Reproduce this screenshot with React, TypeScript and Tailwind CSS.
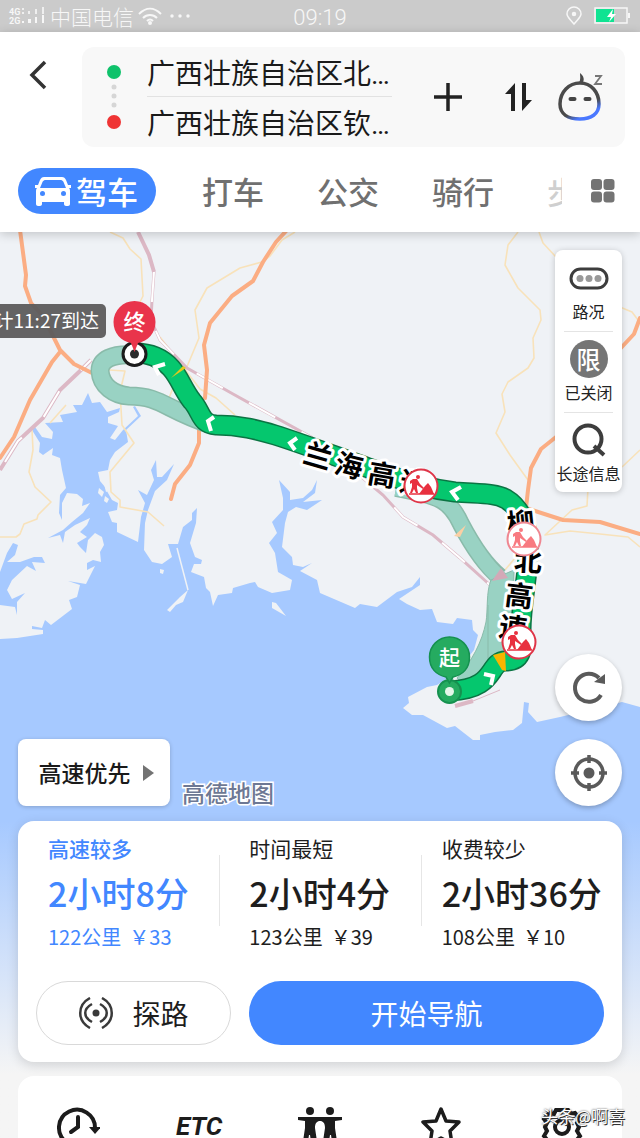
import React, { useState } from 'react';

const modes = ['打车', '公交', '骑行'];

const routes = [
  { name: '高速较多', time: '2小时8分', distance: '122公里', toll: '￥33' },
  { name: '时间最短', time: '2小时4分', distance: '123公里', toll: '￥39' },
  { name: '收费较少', time: '2小时36分', distance: '108公里', toll: '￥10' },
];

const mainRoute =
  'M135 353 C152 353 163 359 171 368 C180 378 183 390 192 401 C202 412 200 424 216 425 C240 425 258 430 275 435 C310 446 345 460 380 472 C410 483 430 489 455 492 C480 494 495 493 506 499 C518 506 527 522 528 540 C530 570 521 600 521 630 C524 652 520 661 506 661 C487 661 498 689 450 691';

const coast =
  'M0 639 L17 638 43 634 43 630 32 629 32 626 42 628 45 620 51 625 72 609 69 600 77 597 80 585 68 581 86 584 95 566 87 570 87 563 93 560 101 562 100 552 104 545 102 537 95 533 88 540 86 553 80 547 77 543 87 537 80 532 87 525 90 518 75 525 65 532 63 543 60 535 48 538 63 530 72 522 83 513 90 503 82 506 83 499 77 494 67 493 62 503 62 520 59 513 60 495 66 488 62 470 60 458 52 455 53 448 43 455 39 452 40 443 32 430 35 427 42 437 52 439 53 432 45 423 63 422 60 415 77 412 73 405 82 405 88 393 92 403 100 402 107 412 120 408 119 412 108 417 108 423 118 426 110 438 115 440 123 430 138 416 133 407 135 406 141 416 126 430 128 442 115 452 110 460 108 470 98 472 100 481 105 487 108 493 112 500 118 503 117 510 108 512 112 522 117 523 117 532 138 542 141 517 145 503 138 490 147 495 154 480 151 470 156 460 157 477 162 477 174 464 167 480 155 491 148 510 145 523 144 550 152 562 162 564 172 557 168 544 178 544 183 527 192 520 192 513 197 508 196 523 190 543 195 557 202 560 201 564 194 564 191 572 204 577 206 588 210 592 213 606 218 595 232 593 233 588 250 583 255 582 258 587 272 593 290 590 292 580 278 572 275 553 269 543 277 533 272 522 283 510 283 498 279 480 290 492 290 500 303 498 312 490 317 480 315 493 303 502 322 500 307 510 296 507 288 512 285 523 282 547 292 557 293 565 303 567 312 563 300 571 317 580 320 593 355 608 360 604 377 607 397 592 412 587 420 577 420 585 399 599 407 604 420 610 432 609 437 622 453 624 457 618 472 620 473 630 478 635 474 650 455 674 437 685 427 687 408 697 409 703 403 708 412 715 423 715 447 728 455 726 473 740 480 740 480 735 495 732 513 730 522 723 524 702 529 703 528 712 537 722 560 717 622 702 640 707 640 1138 0 1138 Z';

function RoadWork({ x, y, faded = false }: { x: number; y: number; faded?: boolean }) {
  return (
    <g transform={`translate(${x} ${y})`}>
      <circle r="16.5" fill="#fff" stroke={faded ? '#ef8791' : '#df3548'} strokeWidth="2" />
      <g fill={faded ? '#f87a80' : '#e8303f'}>
        <circle cx="-3" cy="-9" r="2" />
        <path d="M-8 -7 L-4 -7 L-1 -2 L3 2 L2 3 L-4 -1 L-4 2 L-3 7 L-5 7 L-7 3 L-9 7 L-11 7 L-9 1 L-9 -3 L-11 -2 L-11 -5 Z" />
        <path d="M-2 8 L4 0 L7 -3 L10 1 L13 8 Z" />
      </g>
      <path d="M-12 8 H13" stroke={faded ? '#f87a80' : '#e8303f'} strokeWidth="1.5" />
    </g>
  );
}

function RoadName({ x, y, angle, children }: { x: number; y: number; angle: number; children: string }) {
  return (
    <text
      transform={`translate(${x} ${y}) rotate(${angle})`}
      textAnchor="middle"
      dy="10"
      className="text-[28px] font-bold"
      fill="#000"
      stroke="#fff"
      strokeWidth="6"
      strokeLinejoin="round"
      paintOrder="stroke"
    >
      {children}
    </text>
  );
}

function RouteMap() {
  return (
    <svg
      className="absolute inset-0 h-full w-full"
      viewBox="0 232 640 906"
      preserveAspectRatio="xMidYMin slice"
      aria-label="路线地图"
    >
      <rect x="0" y="232" width="640" height="906" fill="#eff2f6" />

      {/* water */}
      <path d={coast} fill="#a6c9ff" />
      <path
        d="M0 572 L7 553 13 543 18 545 15 555 7 562 20 562 34 557 42 557 45 563 32 562 36 571 27 566 12 580 7 590 12 599 25 593 17 602 17 615 15 607 0 605 Z"
        fill="#a6c9ff"
      />
      <path d="M167 610 L180 597 188 590 183 602 176 605 170 612 Z M272 602 L276 603 286 616 272 608 Z M160 569 l4 1 -1 4 -3 -1 Z" fill="#eff2f6" />
      <path d="M177 548 L188 590" stroke="#eff2f6" strokeWidth="1.5" />
      <path d="M104 484 l6 -3 3 8 -7 3 Z M99 488 l5 4 -2 5 -4 -4 Z M105 496 l4 3 -2 4 -3 -2 Z" fill="#eff2f6" />

      {/* minor roads */}
      <g fill="none" stroke="#f8e2ba" strokeWidth="1.6" strokeLinejoin="round">
        <path d="M110 232 L123 238 130 249 141 259 143 296 138 306" />
        <path d="M295 232 L282 240 270 256 262 262 240 268 207 288 195 310 199 338 186 369 173 388 169 398" />
        <path d="M109 370 L125 371 120 392 122 425 134 443 110 472 111 492 120 500 120 507 148 512 164 526" />
        <path d="M32 430 L33 450 29 472 35 487 51 502 38 515 37 519 24 524 20 534 16 537 0 537" />
        <path d="M160 337 L176 358 200 389 216 398 235 415 M66 405 L50 423" />
        <path d="M518 232 L508 245 505 265 518 288 540 310 541 320 533 338 534 358 528 368 508 382 502 394 505 412 496 433 510 455 528 480" />
        <path d="M539 232 L543 243 556 257 M620 307 L632 312 638 320 M622 467 L640 450" />
        <path d="M588 488 L587 506 572 510 545 535 570 531 600 534 628 537 640 547 M520 552 L505 570" />
      </g>

      {/* railways */}
      <g fill="none">
        <g stroke="#dcb8c5" strokeWidth="4">
          <path d="M138 232 L149 255 154 272" />
          <path d="M91 360 L80 371 60 390 43 418 18 441 0 470" />
          <path d="M455 706 L473 701" />
          <path d="M154 272 L152 300 151 320 160 340 187 368 233 394 311 437 345 463 383 495 403 517 433 535 460 558 490 585" strokeWidth="3" />
        </g>
        <g stroke="#fff" strokeWidth="2" strokeDasharray="30 30">
          <path d="M154 272 L152 300 151 320 160 340 187 368 233 394 311 437 345 463 383 495 403 517 433 535 460 558 490 585" />
          <path d="M5 462 L18 441 43 418 60 390 80 371 91 360" />
        </g>
        <path d="M473 701 L500 690" stroke="#dcb8c5" strokeWidth="1" />
      </g>

      {/* highways */}
      <g fill="none" stroke="#fbad83" strokeWidth="4" strokeLinejoin="round" strokeLinecap="round">
        <path d="M20 230 L26 275 25 286 31 303 43 316 60 350 74 364 92 373 M60 352 L52 362 30 400 14 437 0 458" />
        <path d="M0 321 L40 321" strokeWidth="3" />
        <path d="M287 230 L276 242 263 262 253 281 232 296 210 323 204 345 207 370 205 398 M199 428 L199 443 190 465 175 484 171 499" />
        <path d="M640 318 L634 334 620 349 M556 437 L541 449 531 468 528 490 526 508 563 520 600 522 640 534" />
      </g>

      {/* alternative routes */}
      <g fill="none" strokeLinejoin="round">
        <path d="M135 355 C112 353 100 360 100 371 C101 386 114 395 129 396 C162 396 165 410 212 425" stroke="#8abbaa" strokeWidth="19" />
        <path d="M135 355 C112 353 100 360 100 371 C101 386 114 395 129 396 C162 396 165 410 212 425" stroke="#99d2c3" strokeWidth="16" />
        <path d="M396 488 C440 496 450 500 461 524 C472 545 485 565 500 577" stroke="#8abbaa" strokeWidth="18" />
        <path d="M396 488 C440 496 450 500 461 524 C472 545 485 565 501 579" stroke="#99d2c3" strokeWidth="15" />
        <path d="M504 492 C520 498 527 506 533 518" stroke="#8abbaa" strokeWidth="4" />
        <path
          d="M491 580 C486 592 488 610 486 622 C482 642 472 661 457 678 L462 684 C490 680 500 655 512 645 L514 570 Z"
          fill="#99d2c3"
          stroke="#8abbaa"
        />
        <path d="M488 605 V660" stroke="#8abbaa" />
        <path d="M492 581 L501 568 508 578 Z" fill="#d3a9b7" />
        <path d="M454 536 L466 525 460 537 Z" fill="#fbcfa4" />
      </g>

      {/* selected route */}
      <g fill="none" strokeLinejoin="round">
        <path d={mainRoute} stroke="#0b7443" strokeWidth="21" />
        <path d={mainRoute} stroke="#05c76e" strokeWidth="18" />
        <path d="M171 378 L183 366 186 368 Z" fill="#e3c81c" />
        <path d="M493 655 L505 652 506 671 502 670 Z" fill="#f7b500" />
        <g stroke="#fff" strokeWidth="4" strokeLinejoin="miter">
          <path d="M165 364 L155 367 159 375" />
          <path d="M214 417 L208 421 211 431" />
          <path d="M297 438 L290 443 295 450" />
          <path d="M461 487 L452 492 458 500" />
          <path d="M484 674 L493 676 491 685" />
        </g>
      </g>

      <RoadName x={318} y={456} angle={16}>兰</RoadName>
      <RoadName x={349} y={466} angle={14}>海</RoadName>
      <RoadName x={382} y={475} angle={10}>高</RoadName>
      <RoadName x={414} y={483} angle={10}>速</RoadName>
      <RoadName x={521} y={523} angle={-6}>柳</RoadName>
      <RoadName x={528} y={561} angle={3}>北</RoadName>
      <RoadName x={519} y={596} angle={7}>高</RoadName>
      <RoadName x={513} y={628} angle={8}>速</RoadName>

      <RoadWork x={421} y={486} />
      <RoadWork x={524} y={539} faded />
      <RoadWork x={519} y={642} />

      {/* destination */}
      <rect x="-40" y="304" width="146" height="34" rx="5" fill="#5c5b5c" fillOpacity="0.95" />
      <text x="99" y="328" textAnchor="end" className="text-[19px]" fill="#fff">预计11:27到达</text>
      <circle cx="134.5" cy="354" r="11.5" fill="#fff" stroke="#1c1c1c" strokeWidth="3" />
      <circle cx="134.5" cy="354" r="4.5" fill="#2b2b2b" />
      <path d="M134.5 352 L131 343 C121 341 113.5 333 113.5 322 A21 21 0 0 1 155.5 322 C155.5 333 148 341 138 343 Z" fill="#e9344b" />
      <text x="134.5" y="330" textAnchor="middle" className="text-[22px] font-medium" fill="#fff">终</text>

      {/* origin */}
      <circle cx="449.5" cy="691.5" r="11.5" fill="#25ab60" stroke="#15914f" strokeWidth="2" />
      <path
        d="M449.5 683 L446 677 C436 675 429.5 668 429.5 657 A20 20 0 0 1 469.5 657 C469.5 668 463 675 453 677 Z"
        fill="#25ab60"
        stroke="#15914f"
        strokeWidth="1.5"
      />
      <circle cx="449.5" cy="691.5" r="4.5" fill="#e4f6e9" />
      <text x="449.5" y="665" textAnchor="middle" className="text-[21px] font-medium" fill="#fff">起</text>
    </svg>
  );
}

function StatusBar() {
  return (
    <div className="flex h-8 shrink-0 items-center bg-[#cbcbcb] px-2 text-[#f7f7f7]">
      <div className="flex flex-1 items-center">
        <svg width="38" height="20" viewBox="0 0 38 20" fill="currentColor" className="mr-1">
          <text x="1" y="9" className="font-['Roboto'] text-[9px] font-bold">4G</text>
          <text x="1" y="18" className="font-['Roboto'] text-[9px] font-bold">2G</text>
          <path d="M14 2h2v2h-2z M14 6h2v2h-2z M20 5h2v3h-2z M27 3h2v5h-2z M34 1h2v7h-2z" opacity="0.8" />
          <path d="M14 15h2v2h-2z M20 13h3v4h-3z M27 11h2v6h-2z M34 9h2v8h-2z" />
        </svg>
        <span className="text-[21px] leading-[30px] font-light">中国电信</span>
        <svg width="60" height="20" viewBox="0 0 60 20" fill="none" stroke="currentColor" strokeWidth="2" className="ml-[2px]">
          <path d="M3 8 C10 1 18 1 25 8 M7 12 C11 8 17 8 21 12 M11 15 C13 13 15 13 17 15" />
          <circle cx="14" cy="17" r="1" fill="currentColor" />
          <g fill="currentColor" stroke="none">
            <circle cx="36" cy="10" r="1.7" />
            <circle cx="44" cy="10" r="1.7" />
            <circle cx="52" cy="10" r="1.7" />
          </g>
        </svg>
      </div>
      <span className="pt-1 font-['Roboto'] text-[22px] leading-7 font-light">09:19</span>
      <div className="flex flex-1 items-center justify-end gap-3">
        <svg width="16" height="20" viewBox="0 0 16 20" fill="none" stroke="currentColor" strokeWidth="1.5">
          <path d="M8 18 C4 13 1 11 1 8 A7 7 0 0 1 15 8 C15 11 12 13 8 18 Z" />
          <circle cx="8" cy="8" r="1.5" fill="currentColor" />
        </svg>
        <svg width="38" height="18" viewBox="0 0 38 18">
          <rect x="1" y="1" width="32" height="15" fill="none" stroke="#f7f7f7" strokeWidth="1.5" />
          <rect x="2" y="2" width="18" height="13" fill="#10e392" />
          <path d="M34 6 h2 v5 h-2 z" fill="#f7f7f7" />
          <path d="M19 2 L13 10 H17 L15 15 L22 7 H18 Z" fill="#fff" />
        </svg>
      </div>
    </div>
  );
}

function Header() {
  const [from, setFrom] = useState('广西壮族自治区北…');
  const [to, setTo] = useState('广西壮族自治区钦…');

  return (
    <header className="z-10 shrink-0 bg-white pt-[15px] pb-[18px] shadow-[0_2px_10px_rgba(0,0,0,0.2)]">
      <div className="flex pr-[15px]">
        <button type="button" aria-label="返回" className="flex h-14 w-[82px] items-center pl-7">
          <svg width="20" height="32" viewBox="0 0 20 32" fill="none" stroke="#333" strokeWidth="3.5">
            <path d="M17 3 L4 16 L17 29" />
          </svg>
        </button>
        <div className="flex flex-1 items-center rounded-xl bg-[#f8f8f8] pr-[21px] pl-6">
          <svg width="16" height="66" viewBox="0 0 16 66" className="mr-[25px] shrink-0">
            <circle cx="8" cy="8" r="7" fill="#0fc26b" />
            <circle cx="8" cy="23" r="2.5" fill="#d6d6d6" />
            <circle cx="8" cy="32" r="2.5" fill="#d6d6d6" />
            <circle cx="8" cy="41" r="2.5" fill="#d6d6d6" />
            <circle cx="8" cy="58" r="7" fill="#ef3434" />
          </svg>
          <div className="min-w-0 flex-1 font-['Roboto','Noto_Sans_CJK_SC',sans-serif] text-[28px] text-[#1a1a1a]">
            <input
              aria-label="起点"
              value={from}
              onChange={e => setFrom(e.target.value)}
              className="block h-[50px] w-full border-b border-[#e2e2e2] outline-none"
            />
            <input
              aria-label="终点"
              value={to}
              onChange={e => setTo(e.target.value)}
              className="block h-[50px] w-full outline-none"
            />
          </div>
          <button type="button" aria-label="添加途经点" className="ml-[42px]">
            <svg width="28" height="28" viewBox="0 0 28 28" stroke="#222" strokeWidth="3.5">
              <path d="M14 0 V28 M0 14 H28" />
            </svg>
          </button>
          <button type="button" aria-label="交换起终点" className="ml-[42px]">
            <svg width="28" height="28" viewBox="0 0 28 28" fill="#222">
              <path d="M1 11 L11 0 V28 H7 V11 Z M18 0 H22 V17 H28 L18 28 Z" />
            </svg>
          </button>
          <button type="button" aria-label="语音助手" className="ml-[26px]">
            <svg width="46" height="50" viewBox="0 0 46 50" fill="none">
              <defs>
                <linearGradient id="face" x1="0.3" y1="0.2" x2="0.75" y2="1">
                  <stop offset="0.6" stopColor="#4a4a4a" />
                  <stop offset="0.85" stopColor="#4a78ff" />
                </linearGradient>
              </defs>
              <path
                d="M22 11 C33 11 41 20 41 32 C41 42 33 47 22 47 C10 47 2 42 2 32 C2 20 11 11 22 11 Z"
                stroke="url(#face)"
                strokeWidth="3.5"
              />
              <path d="M21 11 C23 7 22 4 22 1 C26 4 27 8 24 12 Z" fill="#4a4a4a" />
              <path d="M12.5 27 H16.5 M27.5 27 H31.500" stroke="#444" strokeWidth="4" strokeLinecap="round" />
              <path d="M37 4 H43 L37 12 H44" stroke="#777" strokeWidth="1.8" />
            </svg>
          </button>
        </div>
      </div>

      <nav className="mt-[21px] flex h-[46px] items-center pr-[25px] pl-[18px] text-[31px] font-medium text-[#707070]">
        <button type="button" className="flex h-full shrink-0 items-center gap-[5px] rounded-full bg-[#4287ff] pr-[18px] pl-[17px] text-white">
          <svg width="36" height="30" viewBox="0 0 36 30">
            <path
              d="M9 1 H27 C29 1 30 2 31 4 L33 9 L36 9 V12 H34 C35 13 35 14 35 16 V28 C35 29 34 30 33 30 H31 C30 30 29 29 29 28 V26 H7 V28 C7 29 6 30 5 30 H3 C2 30 1 29 1 28 V16 C1 14 1 13 2 12 H0 V9 L3 9 L5 4 C6 2 7 1 9 1 Z"
              fill="#fff"
            />
            <path d="M10 4 H26 C27 4 28 5 28.5 6 L31 12 H5 L7.5 6 C8 5 9 4 10 4 Z" fill="#4287ff" />
            <circle cx="7.5" cy="17.5" r="2.5" fill="#4287ff" />
            <circle cx="28.5" cy="17.5" r="2.5" fill="#4287ff" />
          </svg>
          驾车
        </button>
        <div className="ml-[46px] flex flex-1 gap-[53px] overflow-hidden">
          {modes.map(mode => (
            <button key={mode} type="button" className="shrink-0">{mode}</button>
          ))}
          <button type="button" className="w-[15px] overflow-hidden text-left whitespace-nowrap text-[#cfcfcf]">
            步行
          </button>
        </div>
        <button type="button" aria-label="更多出行方式">
          <svg width="24" height="24" viewBox="0 0 24 24" fill="#747474">
            <rect x="0" y="0" width="11" height="11" rx="3" />
            <rect x="12.5" y="0" width="11" height="11" rx="3" />
            <rect x="0" y="12.5" width="11" height="11" rx="3" />
            <rect x="12.5" y="12.5" width="11" height="11" rx="3" />
          </svg>
        </button>
      </nav>
    </header>
  );
}

function MapControls() {
  const tool = 'flex w-full flex-col items-center text-[16px] leading-6 text-[#222]';
  const round = 'flex size-[67px] items-center justify-center rounded-full bg-white shadow-[0_2px_5px_rgba(0,0,0,0.25)]';

  return (
    <div className="relative flex flex-1 items-stretch justify-between px-[18px] pt-[18px] pb-[15px]">
      <div className="flex items-end gap-3">
        <button
          type="button"
          className="flex h-[67px] w-[152px] items-center justify-center gap-3 rounded-lg bg-white pl-1 text-[23px] font-medium text-[#1a1a1a] shadow-[0_1px_4px_rgba(0,0,0,0.2)]"
        >
          高速优先
          <svg width="11" height="16" viewBox="0 0 11 16" fill="#737373">
            <path d="M0 0 L11 8 L0 16 Z" />
          </svg>
        </button>
        <span className="text-[23px] leading-7 font-medium text-[#6d7894] [paint-order:stroke] [-webkit-text-stroke:3px_#ffffff]">
          高德地图
        </span>
      </div>

      <div className="flex flex-col">
        <div className="flex w-[67px] flex-col items-center rounded-lg bg-white shadow-[0_1px_6px_rgba(0,0,0,0.2)]">
          <button type="button" className={`${tool} h-[81px] pt-[9px]`}>
            <svg width="40" height="40" viewBox="0 0 40 40">
              <rect x="2" y="10" width="36" height="19" rx="9.5" fill="none" stroke="#3d3d3d" strokeWidth="3" />
              <circle cx="11" cy="19.5" r="3.5" fill="#999" />
              <circle cx="20" cy="19.5" r="3.5" fill="#999" />
              <circle cx="29" cy="19.5" r="3.5" fill="#999" />
            </svg>
            路况
          </button>
          <div className="h-px w-[49px] bg-[#e4e4e4]" />
          <button type="button" className={`${tool} h-20 pt-2`}>
            <span className="mb-[2px] flex size-[38px] items-center justify-center rounded-full bg-[#757575] text-[24px] font-medium text-white">
              限
            </span>
            已关闭
          </button>
          <div className="h-px w-[49px] bg-[#e4e4e4]" />
          <button type="button" className={`${tool} h-[79px] pt-2 whitespace-nowrap`}>
            <svg width="40" height="40" viewBox="0 0 40 40" fill="none" stroke="#3d3d3d" strokeWidth="4">
              <circle cx="19" cy="18" r="13.5" />
              <path d="M25 25 L35 34" />
            </svg>
            长途信息
          </button>
        </div>

        <div className="mt-auto flex flex-col gap-[18px]">
          <button type="button" aria-label="刷新" className={round}>
            <svg width="36" height="36" viewBox="0 0 36 36" fill="none" stroke="#5a5a5a" strokeWidth="4">
              <path d="M30 25 A14 14 0 1 1 28 8" />
              <path d="M34 4 V14 L23 12 Z" fill="#5a5a5a" stroke="none" />
            </svg>
          </button>
          <button type="button" aria-label="定位" className={round}>
            <svg width="38" height="38" viewBox="0 0 38 38" fill="none" stroke="#5a5a5a" strokeWidth="3.5">
              <circle cx="19" cy="19" r="14" />
              <path d="M19 1 V9 M19 29 V37 M1 19 H9 M29 19 H37" />
              <circle cx="19" cy="19" r="5.5" fill="#5a5a5a" stroke="none" />
            </svg>
          </button>
        </div>
      </div>
    </div>
  );
}

function RouteSheet() {
  const [selected, setSelected] = useState(0);

  return (
    <div className="relative shrink-0 bg-linear-to-b from-transparent to-[#f5f5f5] to-80% px-[18px]">
      <section className="rounded-2xl bg-white pt-[14px] pb-[17px] shadow-[0_3px_12px_rgba(0,0,0,0.14)]">
        <div className="grid grid-cols-3">
          {routes.map((route, index) => (
            <button
              key={route.name}
              type="button"
              onClick={() => setSelected(index)}
              className={`relative flex flex-col text-left whitespace-nowrap ${index === 2 ? 'pl-[21px]' : 'pl-[30px]'} ${
                index === selected ? 'text-[#4287ff]' : 'text-[#1e1e1e]'
              }`}
            >
              {index > 0 && <span className="absolute top-5 left-0 h-[71px] w-px bg-[#e6e6e6]" />}
              <span className={`text-[21px] leading-[26px] ${index === selected ? 'font-medium' : ''}`}>{route.name}</span>
              <span className="mt-3 text-[34px] leading-10 font-medium">{route.time}</span>
              <span className="mt-3 flex gap-2 text-[20px] leading-6">
                <span>{route.distance}</span>
                <span>{route.toll}</span>
              </span>
            </button>
          ))}
        </div>
        <div className="mt-8 flex gap-[18px] px-[18px] text-[28px]">
          <button
            type="button"
            className="flex h-16 w-[195px] items-center justify-center gap-[18px] rounded-full border border-[#d9d9d9] text-[#1e1e1e]"
          >
            <svg width="36" height="32" viewBox="0 0 36 32" fill="none" stroke="#3a3a3a" strokeWidth="2.5">
              <path d="M12 1 C-1 8 -1 24 12 31 M24 1 C37 8 37 24 24 31 M14 7 C5 12 5 20 14 25 M22 7 C31 12 31 20 22 25" />
              <circle cx="18" cy="16" r="3.5" fill="#3a3a3a" stroke="none" />
            </svg>
            探路
          </button>
          <button type="button" className="h-16 flex-1 rounded-full bg-[#4287ff] text-white">开始导航</button>
        </div>
      </section>

      <section className="mt-[14px] grid h-[62px] grid-cols-5 justify-items-center overflow-hidden rounded-t-2xl bg-white pt-[30px] text-[#1c1c1c]">
        <button type="button" aria-label="历史" className="h-11">
          <svg width="44" height="44" viewBox="0 0 44 44" fill="none" stroke="currentColor" strokeWidth="4">
            <path d="M10 36 A18 18 0 1 1 39 22" />
            <path d="M33 21 H45 L39 28 Z" fill="currentColor" stroke="none" />
            <path d="M22 11 V21 L15 26" strokeLinecap="round" />
          </svg>
        </button>
        <button type="button" className="h-10 font-['Liberation_Sans_Narrow','Roboto',sans-serif] text-[26px] font-bold italic">
          ETC
        </button>
        <button type="button" aria-label="组队" className="h-11">
          <svg width="44" height="44" viewBox="0 0 44 44" fill="currentColor">
            <circle cx="12" cy="5" r="4" />
            <circle cx="32" cy="5" r="4" />
            <path d="M0 11 H44 V14 L37 15 V22 L40 42 H35 L33 29 H32 L30 42 H24 L27 22 C27 17 25 15 22 15 C19 15 17 17 17 22 L20 42 H14 L12 29 H11 L9 42 H4 L7 22 V15 L0 14 Z" />
          </svg>
        </button>
        <button type="button" aria-label="收藏" className="h-11">
          <svg width="44" height="44" viewBox="0 0 44 44" fill="none" stroke="currentColor" strokeWidth="3.5" strokeLinejoin="round">
            <path d="M22 3 L27 15 L40 16 L31 25 L33 38 L22 32 L11 38 L13 25 L4 16 L17 15 Z" />
          </svg>
        </button>
        <button type="button" aria-label="设置" className="h-11">
          <svg width="44" height="44" viewBox="0 0 44 44" fill="none" stroke="currentColor" strokeWidth="4">
            <circle cx="22" cy="21" r="7" />
            <path d="M16 4 H28 L30 8 L35 7 L40 13 L37 17 L39 21 L37 25 L40 30 L35 36 H9 L4 30 L7 25 L5 21 L7 17 L4 13 L9 7 L14 8 Z" />
          </svg>
        </button>
      </section>

      <span className="absolute right-[15px] bottom-[10px] text-[17px] leading-6 text-white [text-shadow:1px_1px_0_#333,0_0_2px_#333]">
        头条@啊喜
      </span>
    </div>
  );
}

export default function App() {
  return (
    <div className="flex h-screen flex-col overflow-hidden bg-[#f5f5f5] font-['Noto_Sans_CJK_SC',sans-serif]">
      <StatusBar />
      <Header />
      <main className="relative flex flex-1 flex-col">
        <RouteMap />
        <MapControls />
        <RouteSheet />
      </main>
    </div>
  );
}
